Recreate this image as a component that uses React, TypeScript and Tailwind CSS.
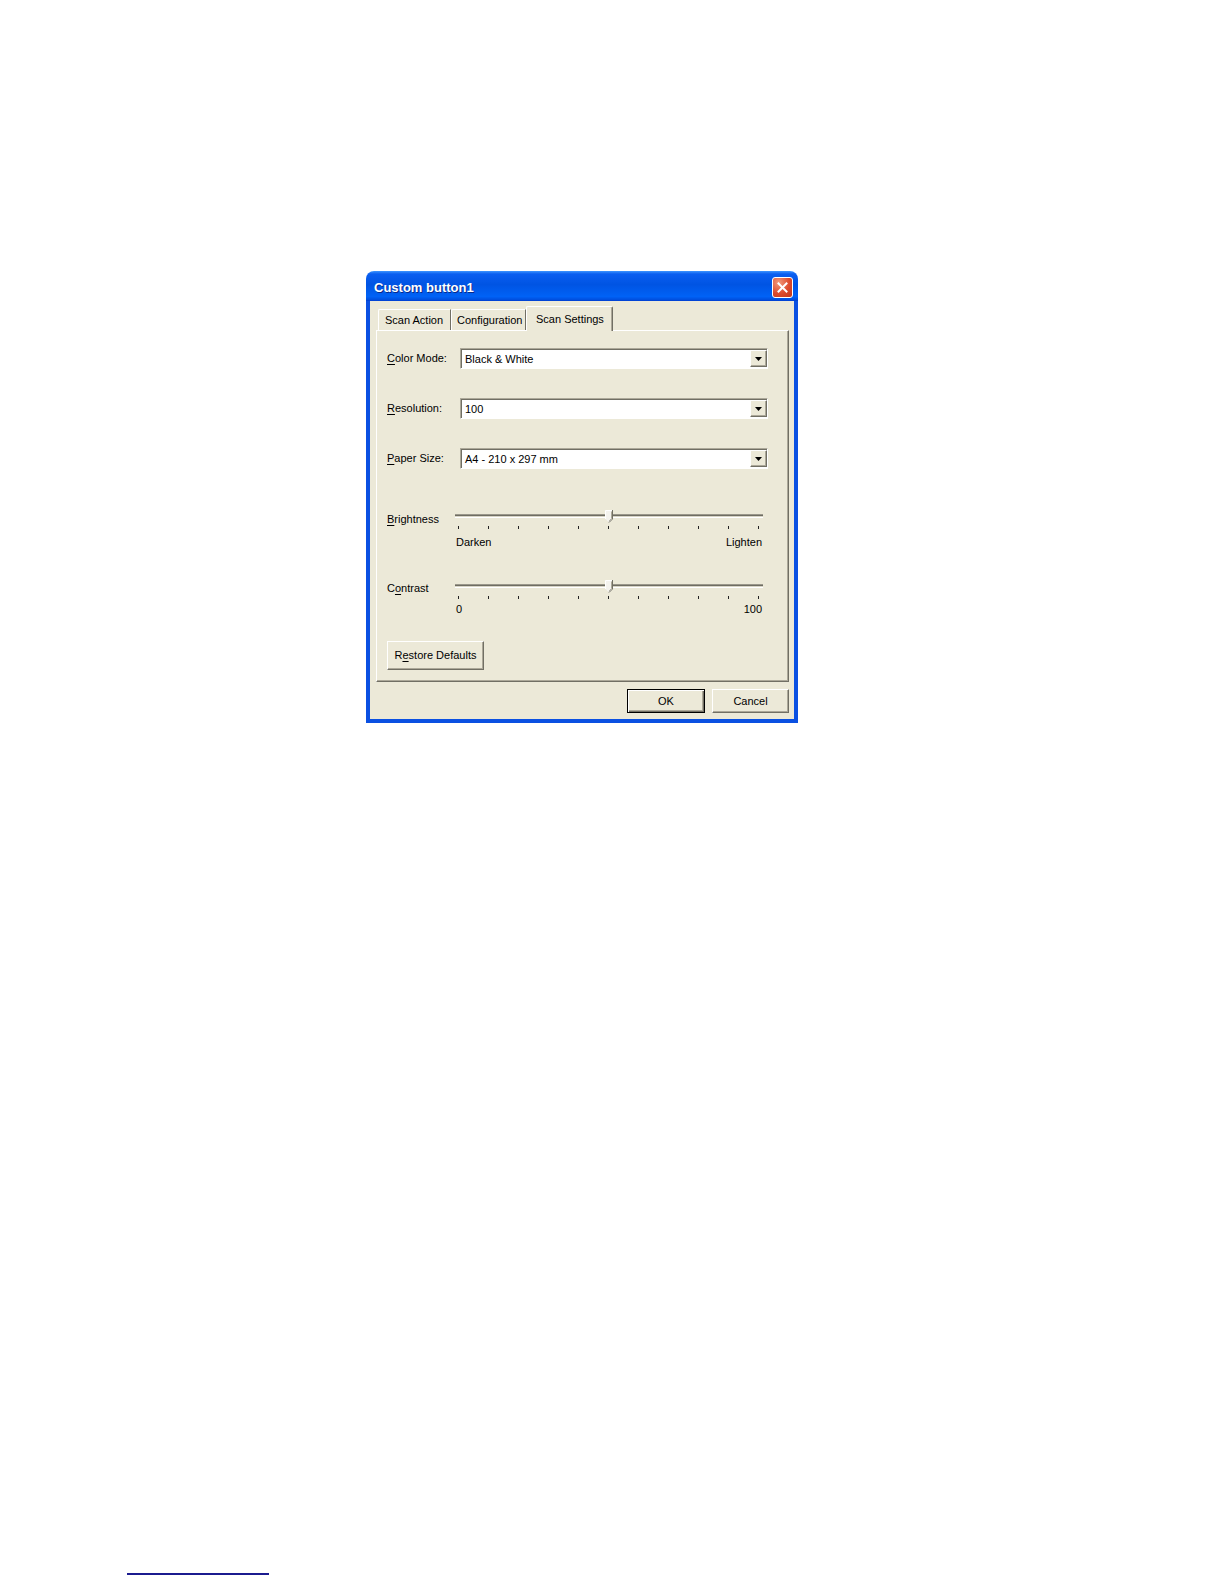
import React from "react";

const raised =
  "border border-t-white border-l-white border-b-[#716f64] border-r-[#716f64] shadow-[inset_-1px_-1px_0_#aca899] bg-[#ece9d8]";

function Key({ c }: { c: string }) {
  return <span className="underline decoration-1 underline-offset-[2px]">{c}</span>;
}

function Combo({ value }: { value: string }) {
  return (
    <div className="flex h-[21px] w-[308px] items-center border border-t-[#aca899] border-l-[#aca899] border-b-white border-r-white bg-white shadow-[inset_1px_1px_0_#716f64]">
      <span className="flex-1 pl-[4px] pt-px">{value}</span>
      <div className={`flex h-[17px] w-[17px] items-center justify-center ${raised}`}>
        <svg width="7" height="4" viewBox="0 0 7 4">
          <path d="M0 0h7L3.5 4z" fill="#000" />
        </svg>
      </div>
    </div>
  );
}

function Thumb() {
  return (
    <svg className="absolute left-[150px] top-[4px]" width="8" height="13" viewBox="0 0 8 13">
      <path d="M0.5 0.5H7.5V9L4 12.5L0.5 9Z" fill="#f4f3ee" />
      <path d="M0.5 9V0.5H7" stroke="#fff" fill="none" />
      <path d="M7.5 0V9L4 12.5" stroke="#716f64" fill="none" />
      <path d="M6.5 1.5V8.6L4 11.2" stroke="#aca899" fill="none" />
    </svg>
  );
}

function Slider({ left, right, gap }: { left: string; right: string; gap: string }) {
  const ticks = Array.from({ length: 11 });
  return (
    <div className="relative w-[308px]">
      <div className="h-[17px] pt-[8px]">
        <div className="h-px bg-[#9a978a]" />
        <div className="h-px bg-[#6f6d63]" />
        <div className="h-px bg-[#d8d5c6]" />
        <div className="h-px bg-white" />
      </div>
      <Thumb />
      <div className="ml-[3px] mt-[3px] flex w-[301px] justify-between">
        {ticks.map((_, i) => (
          <div key={i} className="h-[3px] w-px bg-[#222]" />
        ))}
      </div>
      <div className={`flex justify-between px-px ${gap}`}>
        <span>{left}</span>
        <span>{right}</span>
      </div>
    </div>
  );
}

export default function App() {
  return (
    <div className="min-h-[1584px] w-full bg-white pt-[271px] text-[11px] leading-[13px] text-black font-['Liberation_Sans',Arial,sans-serif]">
      <div className="ml-[366px] w-[432px]">
        {/* title bar */}
        <div className="flex h-[30px] items-start rounded-t-[8px] bg-[linear-gradient(180deg,#3d95ff,#0a5ef0_10%,#0054e3_45%,#0062f6_85%,#0050e0_95%,#003dd0)] pl-[8px] pr-[5px]">
          <span className="flex-1 pt-[9px] text-[13px] font-bold leading-[16px] text-white [text-shadow:1px_1px_0_#0a2a8a]">
            Custom button1
          </span>
          <div className="mt-[6px] flex h-[21px] w-[21px] items-center justify-center rounded-[3px] border border-white bg-[radial-gradient(circle_at_30%_25%,#f29a7c,#dd4b2d_55%,#c0381c)]">
            <svg width="11" height="11" viewBox="0 0 11 11">
              <path d="M1.5 1.5L9.5 9.5M9.5 1.5L1.5 9.5" stroke="#fff" strokeWidth="2" strokeLinecap="square" />
            </svg>
          </div>
        </div>

        {/* body */}
        <div className="border-x-4 border-b-4 border-[#0a50e2] bg-[#ece9d8] pt-[5px] pb-[6px]">
          {/* tabs */}
          <div className="ml-[8px] flex h-[24px] items-end">
            <div className="flex h-[21px] w-[73px] items-start rounded-tl-[2px] border-t border-l border-r border-t-white border-l-white border-r-[#716f64] pl-[6px] pt-[4px]">
              Scan Action
            </div>
            <div className="flex h-[21px] w-[75px] items-start rounded-tl-[2px] border-t border-l border-r border-t-white border-l-white border-r-[#716f64] pl-[5px] pt-[4px]">
              Configuration
            </div>
            <div className="relative z-10 flex h-[25px] w-[87px] self-start items-start rounded-t-[2px] border-t border-l border-r border-t-white border-l-white border-r-[#716f64] bg-[#ece9d8] pl-[9px] pt-[6px] shadow-[inset_-1px_0_0_#aca899]">
              Scan Settings
            </div>
          </div>

          {/* panel */}
          <div className="ml-[6px] h-[352px] w-[413px] border border-t-white border-l-white border-b-[#716f64] border-r-[#716f64] pl-[10px] pt-[17px] shadow-[inset_-1px_-1px_0_#aca899]">
            <div className="flex items-center">
              <span className="w-[73px]">
                <Key c="C" />olor Mode:
              </span>
              <Combo value="Black & White" />
            </div>
            <div className="mt-[29px] flex items-center">
              <span className="w-[73px]">
                <Key c="R" />esolution:
              </span>
              <Combo value="100" />
            </div>
            <div className="mt-[29px] flex items-center">
              <span className="w-[73px]">
                <Key c="P" />aper Size:
              </span>
              <Combo value="A4 - 210 x 297 mm" />
            </div>

            <div className="mt-[37px] flex">
              <span className="w-[68px] pt-[7px]">
                <Key c="B" />rightness
              </span>
              <Slider left="Darken" right="Lighten" gap="mt-[7px]" />
            </div>

            <div className="mt-[27px] flex">
              <span className="w-[68px] pt-[6px]">
                C<Key c="o" />ntrast
              </span>
              <Slider left="0" right="100" gap="mt-[4px]" />
            </div>

            <button className={`mt-[25px] h-[29px] w-[97px] ${raised} text-[11px]`}>
              R<Key c="e" />store Defaults
            </button>
          </div>

          {/* dialog buttons */}
          <div className="mt-[7px] flex justify-end gap-[7px] pr-[5px]">
            <button className="h-[24px] w-[78px] border border-black bg-[#ece9d8] text-[11px] shadow-[inset_1px_1px_0_#fff,inset_-1px_-1px_0_#716f64,inset_-2px_-2px_0_#aca899]">
              OK
            </button>
            <button className={`h-[24px] w-[77px] ${raised} text-[11px]`}>Cancel</button>
          </div>
        </div>
      </div>

      <div className="ml-[127px] mt-[850px] h-[2px] w-[142px] bg-[#1b1b8f]" />
    </div>
  );
}
